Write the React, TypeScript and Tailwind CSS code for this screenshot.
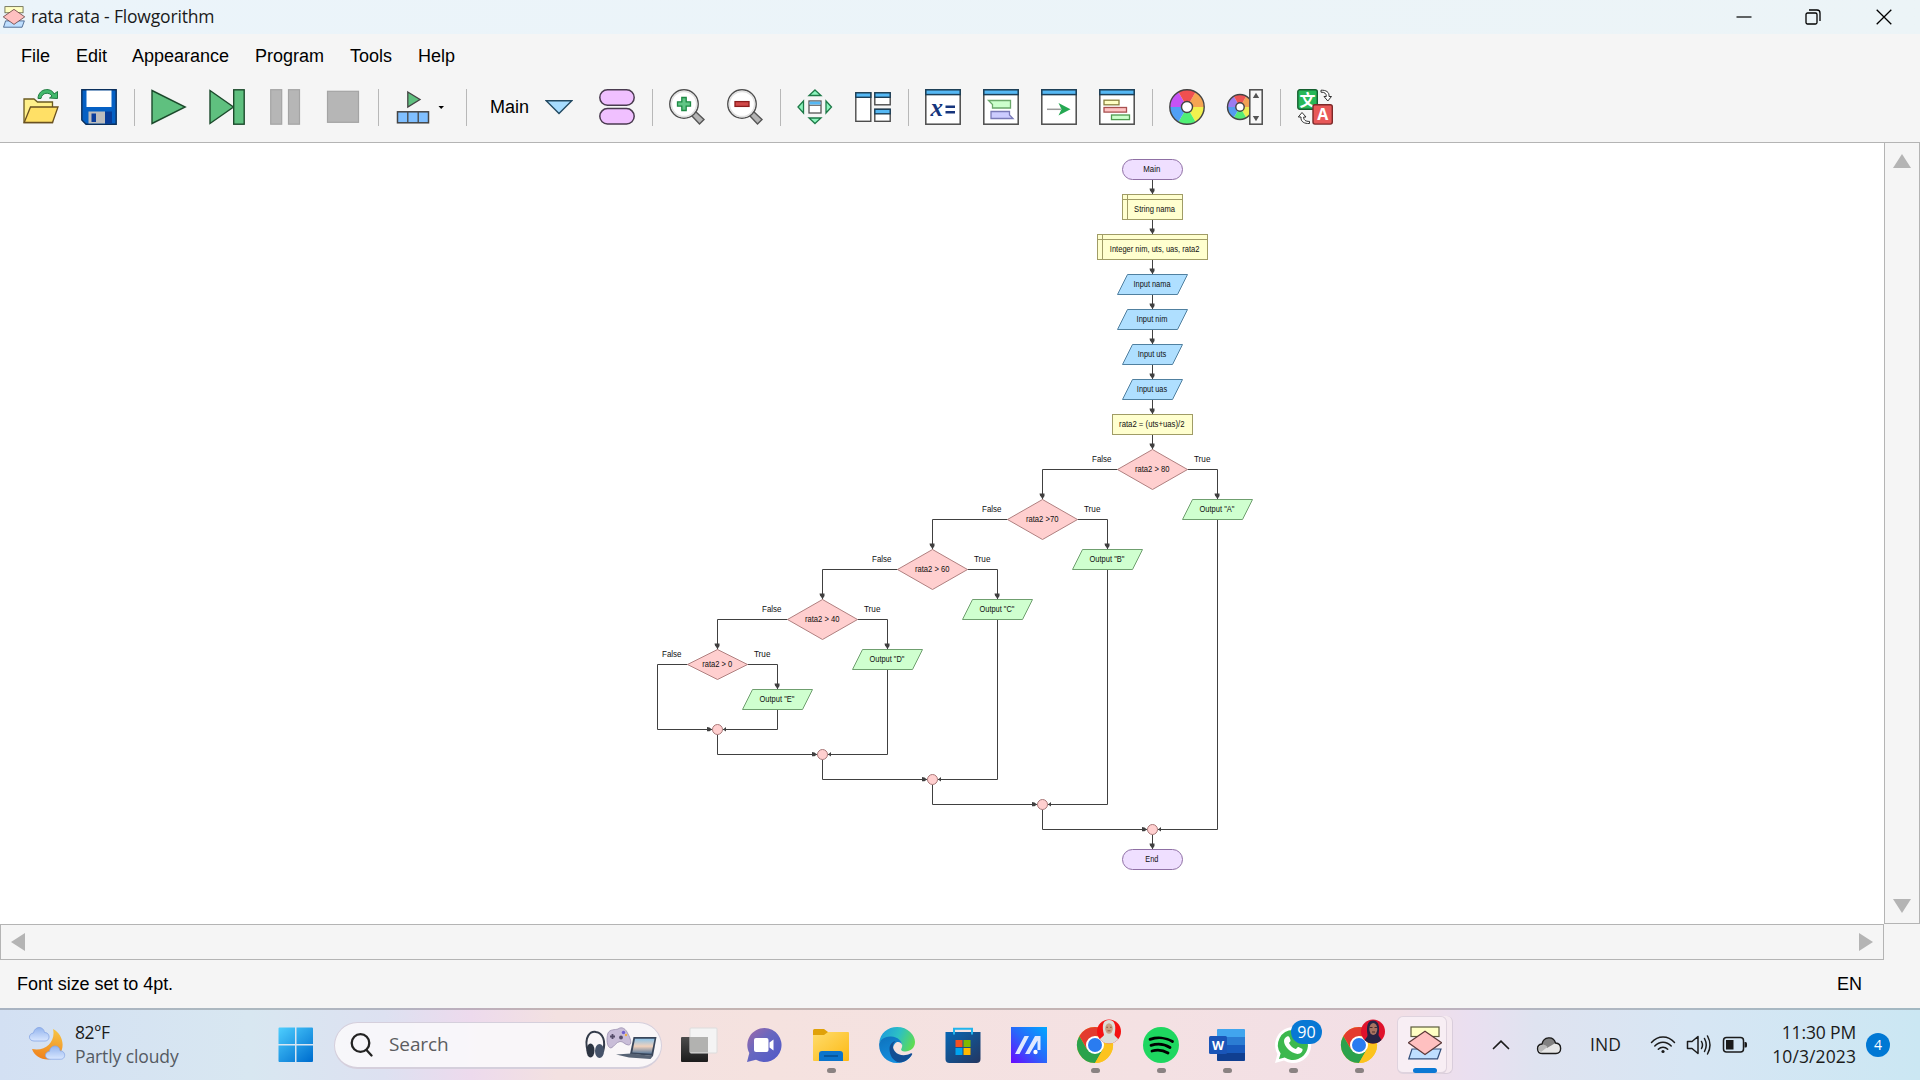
import React from "react";

type Kids = { children?: React.ReactNode };

/* ---------- shared ---------- */

function AppIcon({ className }: { className: string }) {
  return (
    <svg viewBox="0 0 34 34" className={className}>
      <rect x="3" y="1" width="28" height="9.5" fill="#ffffc4" stroke="#5c5c3c" strokeWidth="1.2" />
      <path d="M4 23H33L29.5 32.8H0.8Z" fill="#bfdfff" stroke="#33507c" strokeWidth="1.2" />
      <path d="M17 5.2L33.6 16.8L17 28.4L0.4 16.8Z" fill="#ffc0c0" stroke="#5c3a3a" strokeWidth="1.2" />
    </svg>
  );
}

/* ---------- title bar and menu ---------- */

function TitleBar() {
  return (
    <header className="flex h-[34px] shrink-0 items-center bg-gradient-to-r from-[#ebf4fa] to-[#ecf4f7]">
      <AppIcon className="ml-[3px] h-[22px] w-[22px]" />
      <span className="ml-[6px] whitespace-pre text-[17.5px] leading-none tracking-[-0.17px] text-[#1a1a1a]">
        rata rata - Flowgorithm
      </span>
      <div className="ml-auto flex h-full items-center text-black">
        <svg viewBox="0 0 16 16" className="mr-[53px] h-4 w-4" stroke="currentColor" strokeWidth="1.2">
          <path d="M0.5 8H15.5" />
        </svg>
        <svg viewBox="0 0 16 16" className="mr-[55px] h-4 w-4" fill="none" stroke="currentColor" strokeWidth="1.3">
          <rect x="1" y="4" width="11" height="11" rx="1.5" />
          <path d="M4 1H12Q15 1 15 4V12" />
        </svg>
        <svg viewBox="0 0 16 16" className="mr-[28px] h-4 w-4" stroke="currentColor" strokeWidth="1.3">
          <path d="M0.7 0.7L15.3 15.3M15.3 0.7L0.7 15.3" />
        </svg>
      </div>
    </header>
  );
}

function MenuBar() {
  return (
    <nav className="flex h-[44px] shrink-0 items-center pl-[21px] font-['Liberation_Sans',sans-serif] text-[18px] leading-none text-black">
      <span className="w-[55px]">File</span>
      <span className="w-[56px]">Edit</span>
      <span className="w-[123px]">Appearance</span>
      <span className="w-[95px]">Program</span>
      <span className="w-[68px]">Tools</span>
      <span>Help</span>
    </nav>
  );
}

/* ---------- toolbar ---------- */

function Icon({ children }: Kids) {
  return (
    <svg viewBox="0 0 36 36" className="h-9 w-9 shrink-0 overflow-visible" fill="none">
      {children}
    </svg>
  );
}

function Sep() {
  return <div className="ml-[17px] mr-4 h-[37px] w-px shrink-0 bg-[#b8b8b8]" />;
}

function Group({ children }: Kids) {
  return <div className="flex shrink-0 items-center gap-[22px]">{children}</div>;
}

function WindowFrame({ children }: Kids) {
  return (
    <Icon>
      <rect x="0.8" y="0.8" width="34.4" height="34.4" fill="#fff" stroke="#4c4c4c" strokeWidth="1.5" />
      <rect x="0.8" y="0.8" width="34.4" height="4.8" fill="#55b8f4" stroke="#1d3f57" strokeWidth="1.5" />
      {children}
    </Icon>
  );
}

const WHEEL_COLORS = ["#f5a552", "#f2f24e", "#50f074", "#509ff5", "#c653f5", "#f05050"];
const WHEEL_COLORS_SOFT = ["#f0a254", "#ecec54", "#54ea74", "#549cf0", "#9c7cf0", "#ec5454"];

function Wheel({ cx, cy, r, hole, colors }: { cx: number; cy: number; r: number; hole: number; colors: string[] }) {
  const at = (deg: number) => {
    const a = (deg * Math.PI) / 180;
    return `${cx + r * Math.cos(a)} ${cy + r * Math.sin(a)}`;
  };
  return (
    <g>
      {colors.map((c, i) => (
        <path
          key={c}
          d={`M${cx} ${cy}L${at(-60 + i * 60)}A${r} ${r} 0 0 1 ${at(i * 60)}Z`}
          fill={c}
        />
      ))}
      <circle cx={cx} cy={cy} r={r} stroke="#444" strokeWidth="1.4" />
      <circle cx={cx} cy={cy} r={hole} fill="#fff" stroke="#444" strokeWidth="1.4" />
    </g>
  );
}

function Magnifier({ children }: Kids) {
  return (
    <Icon>
      <path d="M22.5 26.5L26.5 22.5L35 30.5L30.5 35Z" fill="#b4b4b4" stroke="#555" strokeWidth="1.4" />
      <circle cx="15" cy="15" r="14.2" fill="#fff" stroke="#505050" strokeWidth="1.5" />
      <circle cx="15" cy="15" r="12.6" stroke="#e2e2e2" strokeWidth="1.5" />
      {children}
    </Icon>
  );
}

function Toolbar() {
  return (
    <div className="flex h-[64px] shrink-0 items-start pl-[23px] pt-[11px]">
      <Group>
        <Icon>
          <path d="M1 33.5V10H11L14.5 13H29.5V33.5Z" fill="#fff08a" stroke="#6a5a20" strokeWidth="1.3" />
          <path d="M1.2 33.5L7.5 18H35L29.5 33.5Z" fill="#ffe066" stroke="#6a5020" strokeWidth="1.3" />
          <path d="M15 9.5C15.5 -1.5 29 -1.5 31 5L34.5 2.5V9.5L26.5 9L29 7C26.5 3 19 3 18 9.5Z" fill="#42b96c" stroke="#1f7a40" strokeWidth="1" />
        </Icon>
        <Icon>
          <path d="M0.8 0.8H35.2V35.2H5L0.8 31Z" fill="#0560c4" stroke="#0a2f5c" strokeWidth="1.4" />
          <rect x="5.5" y="1.5" width="25" height="16.5" fill="#fff" />
          <rect x="7.5" y="22.5" width="16.5" height="12" fill="#bdbdbd" />
          <rect x="10.5" y="24.5" width="4.5" height="8.5" fill="#0b3d9c" />
          <rect x="24" y="22.5" width="7" height="12" fill="#083c98" />
        </Icon>
      </Group>
      <Sep />
      <Group>
        <Icon>
          <path d="M1 1.5L34.2 18L1 34.5Z" fill="#5fc07f" stroke="#1c4a2c" strokeWidth="1.4" />
        </Icon>
        <Icon>
          <path d="M1 1.5L24.5 18L1 34.5Z" fill="#5fc07f" stroke="#1c4a2c" strokeWidth="1.4" />
          <rect x="24.7" y="0.8" width="10.5" height="34.4" fill="#5fc07f" stroke="#1c4a2c" strokeWidth="1.4" />
        </Icon>
        <Icon>
          <rect x="3.7" y="0.7" width="11" height="34.5" fill="#b6b6b6" stroke="#a4a4a4" strokeWidth="1.2" />
          <rect x="21.5" y="0.7" width="11" height="34.5" fill="#b6b6b6" stroke="#a4a4a4" strokeWidth="1.2" />
        </Icon>
        <Icon>
          <rect x="2.5" y="2.3" width="31" height="31" fill="#b6b6b6" stroke="#a4a4a4" strokeWidth="1.2" />
        </Icon>
      </Group>
      <Sep />
      <svg viewBox="0 0 54 36" className="h-9 w-[54px] shrink-0" fill="none">
        <path d="M12.8 3L25 10.5L12.8 18Z" fill="#5fc07f" stroke="#444" strokeWidth="1.3" />
        <rect x="2.5" y="22.8" width="31" height="11" fill="#80bfff" stroke="#444" strokeWidth="1.5" />
        <path d="M12.8 23V33.5M23.2 23V33.5" stroke="#444" strokeWidth="1.3" />
        <path d="M43.5 17H49L46.2 20Z" fill="#000" />
      </svg>
      <Sep />
      <div className="flex h-9 shrink-0 items-center">
        <span className="ml-[7px] w-[55px] font-['Liberation_Sans',sans-serif] text-[18px] leading-none text-black">
          Main
        </span>
        <svg viewBox="0 0 28 16" className="mr-[26px] h-4 w-7">
          <path d="M1.2 1.7H26.8L14 14.5Z" fill="#a6dcff" stroke="#234a63" strokeWidth="1.4" />
        </svg>
        <Icon>
          <rect x="0.8" y="0.8" width="34.4" height="15.4" rx="7.7" fill="#f0c0ff" stroke="#4a3b50" strokeWidth="1.5" />
          <rect x="0.8" y="19.6" width="34.4" height="15.4" rx="7.7" fill="#f0c0ff" stroke="#4a3b50" strokeWidth="1.5" />
        </Icon>
      </div>
      <Sep />
      <Group>
        <Magnifier>
          <path d="M12.8 8.5H17.2V12.8H21.5V17.2H17.2V21.5H12.8V17.2H8.5V12.8H12.8Z" fill="#60c585" stroke="#1f8a45" strokeWidth="1.3" />
        </Magnifier>
        <Magnifier>
          <rect x="8" y="12.6" width="14" height="4.8" fill="#d04848" stroke="#8c1c1c" strokeWidth="1.3" />
        </Magnifier>
      </Group>
      <Sep />
      <Group>
        <Icon>
          <path d="M18 1L24 6.5H12ZM18 34.5L24 29H12ZM1 18L6.500 12V24ZM34.500 18L29 12V24Z" fill="#8cf5bd" stroke="#1e7a48" strokeWidth="1.3" />
          <rect x="12" y="12" width="12" height="12" fill="#fff" stroke="#555" strokeWidth="1.3" />
          <rect x="12.500" y="12.600" width="11" height="3" fill="#55b8f4" />
          <path d="M12 16.300H24" stroke="#555" strokeWidth="1" />
        </Icon>
        <Icon>
          <rect x="0.8" y="3.8" width="15" height="28.5" fill="#fff" stroke="#4c4c4c" strokeWidth="1.4" />
          <rect x="0.8" y="3.8" width="15" height="4.5" fill="#55b8f4" stroke="#1d3f57" strokeWidth="1.4" />
          <rect x="19.8" y="3.8" width="15.4" height="12" fill="#fff" stroke="#4c4c4c" strokeWidth="1.4" />
          <rect x="19.8" y="3.8" width="15.4" height="4.5" fill="#55b8f4" stroke="#1d3f57" strokeWidth="1.4" />
          <rect x="19.8" y="20.3" width="15.4" height="12" fill="#fff" stroke="#4c4c4c" strokeWidth="1.4" />
          <rect x="19.8" y="20.3" width="15.4" height="4.5" fill="#55b8f4" stroke="#1d3f57" strokeWidth="1.4" />
        </Icon>
      </Group>
      <Sep />
      <Group>
        <WindowFrame>
          <text x="5.5" y="26.5" fill="#16357c" fontFamily="'Liberation Serif', serif" fontStyle="italic" fontWeight="bold" fontSize="25">
            x
          </text>
          <path d="M20.5 17.8H30M20.5 23.3H30" stroke="#16357c" strokeWidth="2.6" />
        </WindowFrame>
        <WindowFrame>
          <path d="M5.5 11.5H27.5V19H9.5V15.5Z" fill="#ccffcc" stroke="#6aa86a" strokeWidth="1.3" />
          <path d="M8 22.5H26.5V26L30 29.500H8Z" fill="#ccccff" stroke="#7a7ab8" strokeWidth="1.3" />
        </WindowFrame>
        <WindowFrame>
          <path d="M6 20.3H20" stroke="#9a9a9a" strokeWidth="1.5" />
          <path d="M17.5 14L29.5 20.3L17.5 26.500L20.500 20.300Z" fill="#25a852" />
        </WindowFrame>
        <WindowFrame>
          <rect x="5" y="11.2" width="15" height="4.6" fill="#ffffc4" stroke="#8a8240" strokeWidth="1.3" />
          <rect x="5" y="18.5" width="22.5" height="4.6" fill="#ffc4c4" stroke="#a85050" strokeWidth="1.3" />
          <rect x="12.5" y="26" width="18" height="4.6" fill="#ccffcc" stroke="#4f9a4f" strokeWidth="1.3" />
        </WindowFrame>
      </Group>
      <Sep />
      <Group>
        <Icon>
          <Wheel cx={18} cy={18} r={17.2} hole={5.5} colors={WHEEL_COLORS} />
        </Icon>
        <Icon>
          <Wheel cx={13} cy={18} r={12.5} hole={4.2} colors={WHEEL_COLORS_SOFT} />
          <rect x="22.8" y="0.8" width="12.4" height="34.4" fill="#f8f8f8" stroke="#4c4c4c" strokeWidth="1.5" />
          <path d="M25.8 9H32.2L29 3.8ZM25.8 27H32.2L29 32.200Z" fill="#555" />
        </Icon>
      </Group>
      <Sep />
      <Icon>
        <rect x="0.8" y="0.8" width="19.5" height="19.5" rx="2" fill="#27b858" stroke="#155f30" strokeWidth="1.4" />
        <text x="10.5" y="16.5" textAnchor="middle" fontFamily="'Noto Sans CJK SC', sans-serif" fontWeight="bold" fontSize="16" fill="#fff">
          文
        </text>
        <rect x="16" y="15.8" width="19.3" height="19.3" rx="2" fill="#e85858" stroke="#7c2828" strokeWidth="1.4" />
        <text x="25.7" y="31.3" textAnchor="middle" fontFamily="'Open Sans', sans-serif" fontWeight="bold" fontSize="16" fill="#fff">
          A
        </text>
        <path d="M24 1.2C29 1 32.500 3 32 7.500H34.500L30.800 12L27 7.500H29.300C29.500 4.500 27.500 3 24 3.200Z" fill="#fff" stroke="#333" strokeWidth="1" />
        <path d="M12.5 34.5C7.500 34.700 3.500 33 4 28H1.300L5 23.500L9 28H6.700C6.500 31 8.500 32.500 12.500 32.400Z" fill="#fff" stroke="#333" strokeWidth="1" />
      </Icon>
    </div>
  );
}

/* ---------- flowchart ---------- */

const INK = "#404040";

function Label({ x, y, w, children }: Kids & { x: number; y: number; w: number }) {
  return (
    <text
      x={x - w / 2}
      y={y}
      textLength={w}
      lengthAdjust="spacingAndGlyphs"
      fontSize="8.6"
      fill="#101010"
      fontFamily="'Liberation Sans', sans-serif"
    >
      {children}
    </text>
  );
}

function Terminal({ y, w, label }: { y: number; w: number; label: string }) {
  return (
    <g>
      <rect x="1122.5" y={y} width="60" height="20" rx="10" fill="#efdfff" stroke="#8f70a5" />
      <Label x={1151.8} y={y + 12.7} w={w}>{label}</Label>
    </g>
  );
}

function Declare({ x, y, w, tw, label }: { x: number; y: number; w: number; tw: number; label: string }) {
  return (
    <g>
      <rect x={x} y={y} width={w} height="25" fill="#ffffcf" stroke="#a09c66" />
      <path d={`M${x + 5} ${y}v25M${x} ${y + 5}h${w}`} stroke="#a09c66" />
      <Label x={1154.6} y={y + 17.7} w={tw}>{label}</Label>
    </g>
  );
}

function Slanted({ cx, y, w, tw, label, out }: { cx: number; y: number; w: number; tw: number; label: string; out?: boolean }) {
  const l = cx - w / 2;
  return (
    <g>
      <path
        d={`M${l + 10} ${y}H${l + w}L${l + w - 10} ${y + 20}H${l}Z`}
        fill={out ? "#cfffcf" : "#afdfff"}
        stroke={out ? "#6f9f6f" : "#5080a0"}
      />
      <Label x={cx - 0.5} y={y + 12.7} w={tw}>{label}</Label>
    </g>
  );
}

function Down({ x, y }: { x: number; y: number }) {
  return <path d={`M${x - 3} ${y - 6}H${x + 2}V${y - 3.5}L${x} ${y - 0.5}L${x - 2.5} ${y - 4}Z`} fill={INK} />;
}

type Branch = {
  cx: number;
  cy: number;
  hw: number;
  hh: number;
  label: string;
  tw: number;
  right: number;
  left: number;
  outY: number;
  out: string;
  joinY: number;
};

const BRANCHES: Branch[] = [
  { cx: 1152.5, cy: 469.5, hw: 35, hh: 20, label: "rata2 > 80", tw: 34.5, right: 1217.5, left: 1042.5, outY: 499.5, out: 'Output "A"', joinY: 829.5 },
  { cx: 1042.5, cy: 519.5, hw: 35, hh: 20, label: "rata2 >70", tw: 32.5, right: 1107.5, left: 932.5, outY: 549.5, out: 'Output "B"', joinY: 804.5 },
  { cx: 932.5, cy: 569.5, hw: 35, hh: 20, label: "rata2 > 60", tw: 34.5, right: 997.5, left: 822.5, outY: 599.5, out: 'Output "C"', joinY: 779.5 },
  { cx: 822.5, cy: 619.5, hw: 35, hh: 20, label: "rata2 > 40", tw: 34.5, right: 887.5, left: 717.5, outY: 649.5, out: 'Output "D"', joinY: 754.5 },
  { cx: 717.5, cy: 664.5, hw: 30, hh: 15, label: "rata2 > 0", tw: 30, right: 777.5, left: 657.5, outY: 689.5, out: 'Output "E"', joinY: 729.5 },
];

function Decision({ b, next }: { b: Branch; next?: Branch }) {
  const side = b.hw + 15;
  return (
    <g>
      <path
        d={
          next
            ? `M${b.cx - b.hw} ${b.cy}H${b.left}V${next.cy - next.hh}M${b.left} ${next.joinY + 5}V${b.joinY}H${b.cx - 5}`
            : `M${b.cx - b.hw} ${b.cy}H${b.left}V${b.joinY}H${b.cx - 5}`
        }
        stroke={INK}
      />
      <path d={`M${b.cx + b.hw} ${b.cy}H${b.right}V${b.outY}M${b.right} ${b.outY + 20}V${b.joinY}H${b.cx + 5}`} stroke={INK} />
      {next && <Down x={b.left} y={next.cy - next.hh} />}
      <Down x={b.right} y={b.outY} />
      <path d={`M${b.cx - 10.5} ${b.joinY - 2.5}V${b.joinY + 1.8}H${b.cx - 8}L${b.cx - 5.5} ${b.joinY}L${b.cx - 8} ${b.joinY - 2}Z`} fill={INK} />
      <path d={`M${b.cx + 5.5} ${b.joinY}L${b.cx + 8.5} ${b.joinY - 2.5}V${b.joinY + 2}Z`} fill={INK} />
      <path
        d={`M${b.cx} ${b.cy - b.hh}L${b.cx + b.hw} ${b.cy}L${b.cx} ${b.cy + b.hh}L${b.cx - b.hw} ${b.cy}Z`}
        fill="#ffcfcf"
        stroke="#b08080"
      />
      <circle cx={b.cx} cy={b.joinY} r="5" fill="#ffcfcf" stroke="#a87878" />
      <Label x={b.cx - 0.3} y={b.cy + 2.7} w={b.tw}>{b.label}</Label>
      <Label x={b.cx - side - 0.7} y={b.cy - 7.3} w={19.5}>False</Label>
      <Label x={b.cx + side - 0.3} y={b.cy - 7.3} w={16.5}>True</Label>
      <Slanted cx={b.right} y={b.outY} w={70} tw={35} label={b.out} out />
    </g>
  );
}

const STEM: [number, number][] = [
  [179.5, 194.5],
  [219.5, 234.5],
  [259.5, 274.5],
  [294.5, 309.5],
  [329.5, 344.5],
  [364.5, 379.5],
  [399.5, 414.5],
  [434.5, 449.5],
  [834.5, 849.5],
];

function Flowchart() {
  return (
    <svg viewBox="0 143 1884 781" className="h-[781px] w-[1884px] shrink-0" fill="none">
      {STEM.map(([a, b]) => (
        <g key={a}>
          <path d={`M1152.5 ${a}V${b}`} stroke={INK} />
          <Down x={1152.5} y={b} />
        </g>
      ))}
      <Terminal y={159.5} w={17} label="Main" />
      <Declare x={1122.5} y={194.5} w={60} tw={41} label="String nama" />
      <Declare x={1097.5} y={234.5} w={110} tw={89.5} label="Integer nim, uts, uas, rata2" />
      <Slanted cx={1152.5} y={274.5} w={70} tw={37} label="Input nama" />
      <Slanted cx={1152.5} y={309.5} w={70} tw={30.8} label="Input nim" />
      <Slanted cx={1152.5} y={344.5} w={60} tw={28.5} label="Input uts" />
      <Slanted cx={1152.5} y={379.5} w={60} tw={30.3} label="Input uas" />
      <rect x="1112.5" y="414.5" width="80" height="20" fill="#ffffcf" stroke="#a09c66" />
      <Label x={1151.8} y={427.2} w={65.5}>rata2 = (uts+uas)/2</Label>
      {BRANCHES.map((b, i) => (
        <Decision key={b.out} b={b} next={BRANCHES[i + 1]} />
      ))}
      <Terminal y={849.5} w={13} label="End" />
    </svg>
  );
}

function Workspace() {
  return (
    <main className="flex h-[818px] shrink-0 flex-col">
      <div className="flex h-[782px] border-t border-[#b4b4b4]">
        <div className="h-[781px] w-[1884px] shrink-0 overflow-hidden bg-white">
          <Flowchart />
        </div>
        <div className="flex w-9 flex-col items-center justify-between border-x border-b border-[#b4b4b4] pb-[10px] pt-[11px]">
          <svg viewBox="0 0 18 14" className="h-[14px] w-[18px]">
            <path d="M9 0L18 14H0Z" fill="#b4b4b4" />
          </svg>
          <svg viewBox="0 0 18 14" className="h-[14px] w-[18px]">
            <path d="M9 14L18 0H0Z" fill="#b4b4b4" />
          </svg>
        </div>
      </div>
      <div className="flex h-9 w-[1884px] items-center justify-between border border-[#b4b4b4] pb-px pl-[10px] pr-[10px]">
        <svg viewBox="0 0 14 18" className="h-[18px] w-[14px]">
          <path d="M0 9L14 0V18Z" fill="#b4b4b4" />
        </svg>
        <svg viewBox="0 0 14 18" className="h-[18px] w-[14px]">
          <path d="M14 9L0 0V18Z" fill="#b4b4b4" />
        </svg>
      </div>
    </main>
  );
}

function StatusBar() {
  return (
    <div className="flex h-[48px] shrink-0 items-center justify-between pl-[17px] pr-[58px] font-['Liberation_Sans',sans-serif] text-[18px] leading-none text-black">
      <span className="tracking-[-0.05px]">Font size set to 4pt.</span>
      <span>EN</span>
    </div>
  );
}

/* ---------- taskbar ---------- */

function Cloud({ x, y, s }: { x: number; y: number; s: number }) {
  return (
    <path
      transform={`translate(${x} ${y}) scale(${s})`}
      d="M5 14C-1 14 -1 6.5 4.5 6C5.5 -1 14.5 -1.5 15.5 5.500C21.500 5.500 21.500 14 16 14Z"
      fill="url(#cloudFill)"
      stroke="#86a6e4"
      strokeWidth="0.8"
    />
  );
}

function Weather() {
  return (
    <div className="ml-[28px] flex w-[250px] items-center">
      <svg viewBox="0 0 38 36" className="-mt-1 h-9 w-[38px]">
        <defs>
          <linearGradient id="cloudFill" x1="0" y1="0" x2="0" y2="1">
            <stop offset="0" stopColor="#93b4ee" />
            <stop offset="1" stopColor="#d9e7ff" />
          </linearGradient>
          <linearGradient id="moonFill" x1="0.5" y1="0" x2="0.3" y2="1">
            <stop offset="0" stopColor="#f6c243" />
            <stop offset="1" stopColor="#f0801c" />
          </linearGradient>
        </defs>
        <path d="M25 4C39 11 38 34 20 34.5C12 34.5 6 30 4 24C18 27 28 16 25 4Z" fill="url(#moonFill)" />
        <Cloud x={1} y={2} s={1} />
        <Cloud x={17} y={20.5} s={0.98} />
      </svg>
      <div className="-mt-[3px] ml-[9px] flex flex-col text-[17.5px] leading-[24px]">
        <span className="tracking-[-0.5px] text-[#1b1b1b]">82°F</span>
        <span className="tracking-[-0.1px] text-[#545a62]">Partly cloudy</span>
      </div>
    </div>
  );
}

function StartLogo() {
  return (
    <svg viewBox="0 0 36 36" className="h-9 w-9 shrink-0">
      <defs>
        <linearGradient id="winFill" gradientUnits="userSpaceOnUse" x1="0" y1="0" x2="30" y2="36">
          <stop offset="0" stopColor="#4fd0ff" />
          <stop offset="1" stopColor="#0070d0" />
        </linearGradient>
      </defs>
      <path d="M0.5 1.500Q0.500 0.500 1.500 0.500H17V17H0.500ZM18.500 0.500H34Q35 0.500 35 1.500V17H18.500ZM0.500 18.500H17V35H1.500Q0.500 35 0.500 34ZM18.500 18.500H35V34Q35 35 34 35H18.500Z" fill="url(#winFill)" />
    </svg>
  );
}

function SearchBox() {
  return (
    <div className="ml-5 flex h-[47px] w-[328px] shrink-0 items-center rounded-full border border-b-2 border-[#d5cfdc] bg-[#faf8fb]/90 pl-[15px] pr-1">
      <svg viewBox="0 0 24 24" className="h-6 w-6" fill="none" stroke="#222" strokeWidth="2.3" strokeLinecap="round">
        <circle cx="10.5" cy="10" r="8.8" />
        <path d="M16.5 17L21.5 22.5" />
      </svg>
      <span className="ml-[15px] text-[19px] leading-none tracking-[-0.1px] text-[#5c5c60]">Search</span>
      <svg viewBox="0 0 74 34" className="ml-auto h-[34px] w-[74px] overflow-visible" fill="none">
        <defs>
          <linearGradient id="screenFill" x1="0" y1="0" x2="0" y2="1">
            <stop offset="0" stopColor="#8ec3e8" />
            <stop offset="0.5" stopColor="#f1d2bd" />
            <stop offset="1" stopColor="#59799c" />
          </linearGradient>
        </defs>
        <path d="M5 24C0 8 8 3 13 4C20 5 23 13 20 24" stroke="#353c4a" strokeWidth="2" />
        <ellipse cx="7.5" cy="22.5" rx="4" ry="7" fill="#2c3442" />
        <ellipse cx="16.5" cy="23" rx="4.5" ry="7" fill="#46536a" />
        <path d="M25 5C27 1 32 2 35 1C39 -2 43 1 45 6C48 11 49 17 45.500 17C42 17 40 13 37 13.500C33 14 31 19 28 20C24 20 23 11 25 5Z" fill="#c9bdd8" stroke="#9a8fb0" strokeWidth="0.8" />
        <path d="M29.500 6V11M27 8.500H32" stroke="#554c68" strokeWidth="1.8" />
        <circle cx="40.5" cy="4.5" r="1.7" fill="#7060d0" />
        <circle cx="38" cy="9.5" r="1.9" fill="#554c68" />
        <circle cx="43" cy="7" r="1.2" fill="#f0b040" />
        <g transform="translate(0 -1)">
          <path d="M50.500 10L73.500 10L70 29L47 27Z" fill="#39465a" />
          <path d="M52 11.700L71.500 11.700L68.500 26.800L49.300 25.500Z" fill="url(#screenFill)" />
          <path d="M33 27.500L48 26.500L70 29L67.500 32L46 30.500Z" fill="#566274" />
        </g>
      </svg>
    </div>
  );
}

function TaskSlot({ children, running }: Kids & { running?: boolean }) {
  return (
    <div className="relative flex h-full w-[66px] shrink-0 items-center justify-center pb-px">
      <svg viewBox="0 0 36 36" className="h-9 w-9 overflow-visible" fill="none">
        {children}
      </svg>
      {running && <div className="absolute bottom-[7px] h-[5px] w-[9px] rounded-full bg-[#8a8282]" />}
    </div>
  );
}

function Chrome() {
  return (
    <g>
      <circle cx="18" cy="18" r="18" fill="#fcc31e" />
      <path d="M2.41 9A18 18 0 0 0 18 36L25.8 22.5L18 18L10.2 22.5Z" fill="#2ba24c" />
      <path d="M18 9H33.59A18 18 0 0 1 18 36L25.8 22.5Z" fill="#fcc31e" />
      <path d="M2.41 9A18 18 0 0 1 33.59 9H18L10.2 22.5Z" fill="#e33b2e" />
      <circle cx="18" cy="18" r="9" fill="#fff" />
      <circle cx="18" cy="18" r="7" fill="#2a7cf0" />
    </g>
  );
}

function TaskIcons() {
  return (
    <div className="ml-[4px] flex h-full shrink-0">
      <TaskSlot>
        <defs>
          <linearGradient id="tvDark" x1="0" y1="0" x2="0" y2="1">
            <stop offset="0" stopColor="#4c4c4c" />
            <stop offset="1" stopColor="#1c1c1c" />
          </linearGradient>
        </defs>
        <rect x="0" y="10" width="27" height="25" rx="1" fill="url(#tvDark)" />
        <rect x="9" y="1" width="27" height="25" rx="1" fill="#f4f4f4" stroke="#dcdcdc" />
        <rect x="9" y="10" width="18" height="15.5" fill="#b2b2b0" />
      </TaskSlot>
      <TaskSlot>
        <defs>
          <linearGradient id="chatFill" x1="0" y1="0" x2="1" y2="1">
            <stop offset="0" stopColor="#a06aa8" />
            <stop offset="0.45" stopColor="#6667c0" />
            <stop offset="1" stopColor="#4f57c8" />
          </linearGradient>
        </defs>
        <path d="M17.500 1A17 17 0 1 1 9 32.700L0 35L2.300 26A17 17 0 0 1 17.500 1Z" fill="url(#chatFill)" />
        <rect x="7" y="11" width="14.5" height="14" rx="2" fill="#fff" />
        <path d="M22.5 15.5L26.5 12.5V23.5L22.5 20.500Z" fill="#fff" />
      </TaskSlot>
      <TaskSlot running>
        <defs>
          <linearGradient id="folderFill" x1="0" y1="0" x2="1" y2="1">
            <stop offset="0" stopColor="#ffdc6c" />
            <stop offset="1" stopColor="#fcb914" />
          </linearGradient>
        </defs>
        <path d="M0 3.5Q0 2 1.500 2H11L15 5H20V12H0Z" fill="#e0a108" />
        <path d="M0 8H11L15 5H35Q36 5 36 6V33Q36 34 35 34H1Q0 34 0 33Z" fill="url(#folderFill)" />
        <path d="M6 34V27Q6 24 9 24H27Q30 24 30 27V34Z" fill="#0b74cc" />
        <path d="M11 29H25" stroke="#054e90" strokeWidth="1.5" />
      </TaskSlot>
      <TaskSlot>
        <defs>
          <linearGradient id="edgeTop" x1="0" y1="0.3" x2="1" y2="0.6">
            <stop offset="0" stopColor="#1e9bdc" />
            <stop offset="0.5" stopColor="#2cc0c4" />
            <stop offset="1" stopColor="#60dc50" />
          </linearGradient>
          <linearGradient id="edgeBody" x1="0" y1="0" x2="0.5" y2="1">
            <stop offset="0" stopColor="#0e72bc" />
            <stop offset="1" stopColor="#1590e0" />
          </linearGradient>
        </defs>
        <path d="M0.2 16C1 6 9 0 18 0C29 0 36 8 36 15C36 21 31 24.5 26.5 24.5C22.5 24.5 21.5 23 22.5 21.5C25 17 21 12 15 11.5C8 10 2 13 0.2 16Z" fill="url(#edgeTop)" />
        <path d="M0.1 18C0 13 6 9 12 9.5C19 10 23 14 23 18C22 15 18.5 14 16 16.5C12 20.5 14 29 22 31C26 32 30 30.5 32.5 28.5C29.5 33 24.5 36 18 36C8 36 0.2 28 0.1 18Z" fill="url(#edgeBody)" />
        <path d="M10.5 22C10.5 17 14 14.5 16.5 14C13 17 13.5 21.5 16 24.5C19.5 29 27 29 31.5 26.5C33 25.8 34 26.8 32.5 28.5C29 33 25 35.5 20.5 35.5C14 34.5 10.5 28 10.5 22Z" fill="#124e94" />
      </TaskSlot>
      <TaskSlot>
        <defs>
          <linearGradient id="storeFill" x1="0" y1="0" x2="1" y2="1">
            <stop offset="0" stopColor="#0767b4" />
            <stop offset="1" stopColor="#243660" />
          </linearGradient>
        </defs>
        <path d="M9 8V1.8H27V8" stroke="#22b4ec" strokeWidth="2" />
        <path d="M0.5 5H35.5V32Q35.5 36 31.5 36H4.5Q0.5 36 0.5 32Z" fill="url(#storeFill)" />
        <path d="M9 5V7.5M27 5V7.5" stroke="#22b4ec" strokeWidth="2" />
        <rect x="10.5" y="13" width="7" height="7" fill="#f25022" />
        <rect x="18.5" y="13" width="7" height="7" fill="#7fba00" />
        <rect x="10.5" y="21" width="7" height="7" fill="#00a4ef" />
        <rect x="18.5" y="21" width="7" height="7" fill="#ffb900" />
      </TaskSlot>
      <TaskSlot>
        <defs>
          <linearGradient id="asusFill" x1="0" y1="1" x2="1" y2="0">
            <stop offset="0" stopColor="#6a08ff" />
            <stop offset="0.5" stopColor="#2868fa" />
            <stop offset="1" stopColor="#00a8ff" />
          </linearGradient>
        </defs>
        <rect width="36" height="36" fill="url(#asusFill)" />
        <path d="M4 27L13.5 9H18L8.5 27ZM14 27L24 9H29.5V23H26.5V13.5L18.5 27Z" fill="#dfe9ff" />
        <circle cx="24.5" cy="25" r="2.2" fill="#fff" />
      </TaskSlot>
      <TaskSlot running>
        <Chrome />
        <clipPath id="av1">
          <circle cx="32" cy="4.5" r="12" />
        </clipPath>
        <g clipPath="url(#av1)">
          <rect x="20" y="-8" width="24" height="25" fill="#f41212" />
          <path d="M21 17C22 11 26 10 27 8C24.500 -2 26 -7 32 -7C38 -7 39.500 -1 37.500 8C38.500 10 42 11 43 17Z" fill="#dcdcd8" />
          <ellipse cx="32" cy="1.5" rx="3.8" ry="5.2" fill="#c9a184" />
          <path d="M30.5 3.8H33.5M29.300 0.300H31M33 0.300H34.700" stroke="#8c5648" />
        </g>
      </TaskSlot>
      <TaskSlot running>
        <circle cx="18" cy="18" r="18" fill="#1ed760" />
        <path d="M7 12.3C14 10 23 10.500 29.500 14.500M8 18.300C14 16.500 21.500 17 27 20.500M9 24C14 22.500 20 23 25 26" stroke="#000" strokeWidth="2.8" strokeLinecap="round" />
      </TaskSlot>
      <TaskSlot running>
        <rect x="8" y="2" width="28" height="32" rx="1.5" fill="#2b7cd3" />
        <path d="M8 10V3.5Q8 2 9.500 2H34.500Q36 2 36 3.500V10Z" fill="#41a5ee" />
        <path d="M8 18H36V26H8Z" fill="#185abd" />
        <path d="M8 26H36V32.5Q36 34 34.500 34H9.500Q8 34 8 32.500Z" fill="#103f91" />
        <rect x="0" y="9" width="18" height="18" rx="1.5" fill="#1a55b8" />
        <text x="9" y="22.5" textAnchor="middle" fontFamily="'Open Sans', sans-serif" fontWeight="bold" fontSize="12.5" fill="#fff">
          W
        </text>
      </TaskSlot>
      <TaskSlot running>
        <path d="M18 0A18 18 0 1 1 9 33.5L0 36L2.500 27A18 18 0 0 1 18 0Z" fill="#fff" />
        <path d="M18 3A15 15 0 1 1 9.700 30.500L4 32L5.600 26.500A15 15 0 0 1 18 3Z" fill="#3cb84e" />
        <path d="M12 9.5C14 8.500 14.500 10 15.500 13C16 14.500 14 15.500 14 16C15.500 19 17.500 21 20.500 22C21.500 22 22.500 19.500 23.500 20L27.500 22C28 24 26 27 22.500 27C15 26 9 19 9 14C9 12 10.500 10 12 9.500Z" fill="#fff" />
        <rect x="16" y="-7" width="31" height="24" rx="12" fill="#0878d4" />
        <text x="31.5" y="10.8" textAnchor="middle" fontFamily="'Open Sans', sans-serif" fontSize="16" fill="#fff">
          90
        </text>
      </TaskSlot>
      <TaskSlot running>
        <Chrome />
        <clipPath id="av2">
          <circle cx="32" cy="4.5" r="12" />
        </clipPath>
        <g clipPath="url(#av2)">
          <rect x="20" y="-8" width="24" height="25" fill="#e0122c" />
          <path d="M22 17C23 12 26.500 11 26.500 8C25 -2 27 -6.500 32 -6.500C38 -6.500 39 0 37.500 8C38.500 11 41 12 41.500 17Z" fill="#272344" />
          <ellipse cx="32.3" cy="2" rx="4" ry="6" fill="#a87260" />
          <path d="M28.500 0.500H31.500M33.500 0.500H36M31 5H34" stroke="#4a2c2c" />
        </g>
      </TaskSlot>
      <div className="relative ml-[5px] mt-[6px] h-[58px] w-[56px] shrink-0">
        <div className="absolute inset-y-0 right-0 w-5 rounded-md border-b border-r border-[#d9cddb] bg-[#f5e9f0]" />
        <div className="relative flex h-full w-[50px] items-center justify-center rounded-md border border-b-2 border-[#dfd3de] bg-[#f8eef4] pb-[3px] pl-[5px]">
          <AppIcon className="h-[34px] w-[34px]" />
          <div className="absolute -bottom-[1px] h-[5px] w-6 rounded-full bg-[#0a78d4]" />
        </div>
      </div>
    </div>
  );
}

function Tray() {
  return (
    <div className="ml-[39px] flex h-full shrink-0 items-center pb-px text-[#1b1b1b]">
      <svg viewBox="0 0 18 12" className="h-3 w-[18px]" fill="none" stroke="#1b1b1b" strokeWidth="1.7" strokeLinecap="round">
        <path d="M1.5 9.5L9 2.2L16.5 9.5" />
      </svg>
      <svg viewBox="0 0 26 20" className="ml-[26px] h-5 w-[26px]">
        <path d="M6.5 18.5C0 18.500 0 9.500 6 9C7.500 1.500 17.500 0.500 19.500 8C26.500 8.500 26 18.500 20 18.500Z" fill="#e6e6e6" />
        <path d="M6 9C7.5 1.5 17.5 0.5 19.5 8L11 13C9 10 6.5 9.5 6 9Z" fill="#828282" />
        <path d="M2.5 15C2 10 8 7.500 11.500 12L5 17Z" fill="#b8b8b8" />
        <path d="M6.5 18.5C0 18.500 0 9.500 6 9C7.500 1.500 17.500 0.500 19.500 8C26.500 8.500 26 18.500 20 18.500Z" fill="none" stroke="#1b1b1b" strokeWidth="1.4" />
      </svg>
      <span className="ml-[28px] w-[32px] text-[17.5px] leading-none tracking-[0.1px]">IND</span>
      <svg viewBox="0 0 26 20" className="ml-[28px] h-5 w-[26px]" fill="none" stroke="#1b1b1b" strokeWidth="1.5" strokeLinecap="round">
        <path d="M1.5 7.5C8 0.3 18 0.3 24.5 7.500M4.800 11C9.500 6 16.500 6 21.200 11M8.300 14.300C11 11.400 15 11.400 17.700 14.300" />
        <circle cx="13" cy="16.5" r="1.6" fill="#1b1b1b" stroke="none" />
      </svg>
      <svg viewBox="0 0 26 22" className="ml-[10px] h-[22px] w-[26px]" fill="none" stroke="#1b1b1b" strokeWidth="1.5" strokeLinecap="round" strokeLinejoin="round">
        <path d="M1.5 7.5H6L12 2.500V19.500L6 14.500H1.500Z" />
        <path d="M15.5 7.5Q17.500 11 15.500 14.500M18.500 4.500Q22 11 18.500 17.500M21.500 2Q26.500 11 21.500 20" />
      </svg>
      <svg viewBox="0 0 26 18" className="ml-[10px] h-[18px] w-[26px]" fill="none">
        <rect x="1.5" y="1.5" width="20" height="14.5" rx="3" stroke="#1b1b1b" strokeWidth="1.5" />
        <rect x="4" y="4" width="7.5" height="9.5" fill="#1b1b1b" />
        <path d="M22.5 6H23.5Q25 6 25 7.500V10Q25 11.500 23.500 11.500H22.500Z" fill="#1b1b1b" />
      </svg>
      <div className="-mt-[2px] ml-[14px] flex w-[94px] flex-col items-end text-[17.5px] leading-[24px]">
        <span className="tracking-[-0.15px]">11:30 PM</span>
        <span className="tracking-[0.1px]">10/3/2023</span>
      </div>
      <div className="ml-[10px] flex h-6 w-6 items-center justify-center rounded-full bg-[#0078d4] text-[14px] leading-none text-white">
        4
      </div>
    </div>
  );
}

function Taskbar() {
  return (
    <footer className="flex h-[72px] shrink-0 items-center border-t-2 border-black/20 bg-[linear-gradient(to_right,#d3e0f3_0%,#d8e7f1_13%,#dde1f1_20%,#eddaed_24.5%,#f3e1e1_29%,#f5e2df_40%,#f4e1e3_60%,#f2dfe6_73%,#eadff0_76.5%,#dfe3f0_80%,#d7e6f4_88%,#cbe7f3_100%)] bg-origin-border">
      <Weather />
      <StartLogo />
      <SearchBox />
      <TaskIcons />
      <Tray />
    </footer>
  );
}

export default function App() {
  return (
    <div className="flex h-[1080px] w-[1920px] flex-col overflow-hidden bg-[#f5f5f5] font-['Open_Sans',sans-serif]">
      <TitleBar />
      <MenuBar />
      <Toolbar />
      <Workspace />
      <StatusBar />
      <Taskbar />
    </div>
  );
}
